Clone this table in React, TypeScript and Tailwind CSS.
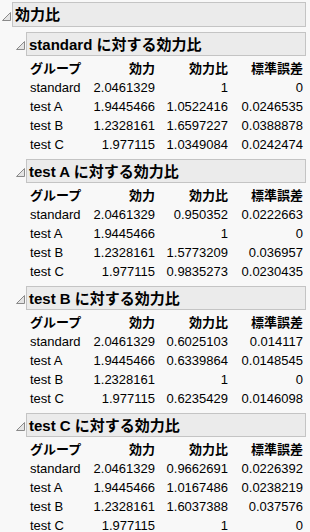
const gruppen = ['standard', 'test A', 'test B', 'test C'];

type Zeile = [string, string, string, string];

const abschnitte: { titel: string; zeilen: Zeile[] }[] = [
  {
    titel: 'standard',
    zeilen: [
      ['standard', '2.0461329', '1', '0'],
      ['test A', '1.9445466', '1.0522416', '0.0246535'],
      ['test B', '1.2328161', '1.6597227', '0.0388878'],
      ['test C', '1.977115', '1.0349084', '0.0242474'],
    ],
  },
  {
    titel: 'test A',
    zeilen: [
      ['standard', '2.0461329', '0.950352', '0.0222663'],
      ['test A', '1.9445466', '1', '0'],
      ['test B', '1.2328161', '1.5773209', '0.036957'],
      ['test C', '1.977115', '0.9835273', '0.0230435'],
    ],
  },
  {
    titel: 'test B',
    zeilen: [
      ['standard', '2.0461329', '0.6025103', '0.014117'],
      ['test A', '1.9445466', '0.6339864', '0.0148545'],
      ['test B', '1.2328161', '1', '0'],
      ['test C', '1.977115', '0.6235429', '0.0146098'],
    ],
  },
  {
    titel: 'test C',
    zeilen: [
      ['standard', '2.0461329', '0.9662691', '0.0226392'],
      ['test A', '1.9445466', '1.0167486', '0.0238219'],
      ['test B', '1.2328161', '1.6037388', '0.037576'],
      ['test C', '1.977115', '1', '0'],
    ],
  },
];

// Kleines Dreieck zum Auf-/Zuklappen (wie im Report-Fenster)
function Dreieck() {
  return (
    <svg width="9" height="9" viewBox="0 0 9 9" className="shrink-0">
      <path d="M8.5 0.5 L8.5 8.5 L0.5 8.5 Z" fill="#e4e4e4" stroke="#8a8a8a" strokeWidth="1" />
    </svg>
  );
}

function Kopf({ text, eingerueckt }: { text: string; eingerueckt?: boolean }) {
  return (
    <div className={eingerueckt ? 'flex items-center pl-[16px] pr-[4px]' : 'flex items-center pl-[2px] pr-[4px]'}>
      <div className="w-[10px] pt-[3px]">
        <Dreieck />
      </div>
      <div
        className={
          'flex flex-1 items-center border border-[#c4c4c4] bg-[#ebebeb] pl-[2px] text-[15px] font-bold leading-none text-black ' +
          (eingerueckt ? 'h-[24px]' : 'h-[25px]')
        }
      >
        {text}
      </div>
    </div>
  );
}

function Tabelle({ zeilen }: { zeilen: Zeile[] }) {
  return (
    <div className="pl-[30px] pt-[3px] text-[13px] leading-[19px] text-black">
      <div className="flex font-bold">
        <span className="w-[60px]">グループ</span>
        <span className="w-[65px] text-right">効力</span>
        <span className="w-[73px] text-right">効力比</span>
        <span className="w-[75px] text-right">標準誤差</span>
      </div>
      {zeilen.map((z) => (
        <div key={z[0]} className="flex">
          <span className="w-[60px]">{z[0]}</span>
          <span className="w-[65px] text-right">{z[1]}</span>
          <span className="w-[73px] text-right">{z[2]}</span>
          <span className="w-[75px] text-right">{z[3]}</span>
        </div>
      ))}
    </div>
  );
}

export default function App() {
  return (
    <div
      className="h-[532px] w-[310px] overflow-hidden bg-[#f8f8f8] pt-[2px]"
      style={{ fontFamily: '"Liberation Sans", "Noto Sans CJK JP", sans-serif' }}
    >
      <Kopf text="効力比" />
      <div className="flex flex-col gap-[5px] pt-[5px]">
        {abschnitte.map((a) => (
          <div key={a.titel} data-gruppen={gruppen.length}>
            <Kopf text={`${a.titel} に対する効力比`} eingerueckt />
            <Tabelle zeilen={a.zeilen} />
          </div>
        ))}
      </div>
    </div>
  );
}
